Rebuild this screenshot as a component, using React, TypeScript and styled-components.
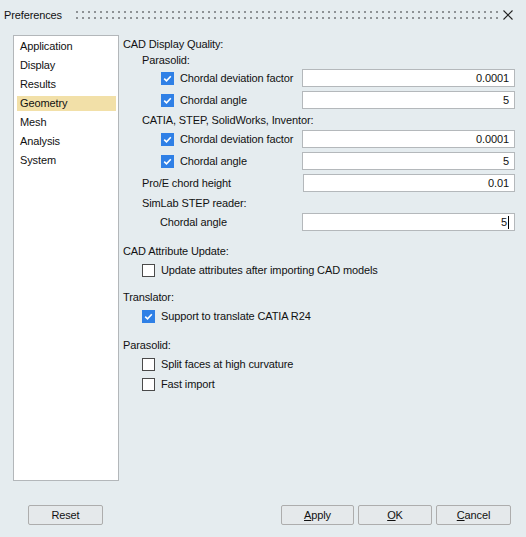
import styled, { createGlobalStyle } from "styled-components";

const GlobalStyle = createGlobalStyle`
  html, body {
    margin: 0;
    padding: 0;
    background: #e5ecef;
  }
  body {
    font-family: "Liberation Sans", Arial, sans-serif;
    font-size: 11px;
    letter-spacing: -0.12px;
    color: #111;
  }
`;

const Window = styled.div`
  width: 526px;
  height: 537px;
  display: flex;
  flex-direction: column;
  background: #e5ecef;
  overflow: hidden;
`;

const TitleBar = styled.div`
  height: 30px;
  display: flex;
  align-items: center;
  padding: 0 13px 0 4px;
`;

const Title = styled.span`
  font-size: 11px;
  width: 72px;
  line-height: 14px;
`;

const Grip = styled.svg`
  flex: 1;
  height: 30px;
  display: block;
`;

const CloseIcon = styled.svg`
  width: 10px;
  height: 10px;
  margin-left: 1px;
  margin-top: -1px;
`;

const Main = styled.div`
  display: flex;
  padding: 5px 11px 0 13px;
  box-sizing: border-box;
  height: 451px;
`;

const NavList = styled.div`
  width: 106px;
  height: 446px;
  box-sizing: border-box;
  background: #fff;
  border: 1px solid #b3b7ba;
  padding-top: 3px;
`;

const NavItem = styled.div<{ $active?: boolean }>`
  height: 15px;
  line-height: 15px;
  margin: 0 2px 4px 3px;
  padding-left: 3px;
  background: ${p => (p.$active ? "#f2e0a8" : "transparent")};
`;

const Content = styled.div`
  flex: 1;
  padding-left: 4px;
  display: flex;
  flex-direction: column;
`;

const Row = styled.div<{ $h: number; $indent?: number; $top?: number }>`
  height: ${p => p.$h}px;
  margin-top: ${p => p.$top ?? 0}px;
  padding-left: ${p => p.$indent ?? 0}px;
  display: flex;
  align-items: center;
  white-space: nowrap;
`;

const Label = styled.span`
  flex: 1;
  line-height: 14px;
`;

const Field = styled.div<{ $w?: number }>`
  width: ${p => p.$w ?? 213}px;
  height: 18px;
  box-sizing: border-box;
  background: #fff;
  border: 1px solid #b4b8bb;
  display: flex;
  align-items: center;
  justify-content: flex-end;
  padding-right: 5px;
  font-size: 11px;
`;

const Caret = styled.span`
  display: inline-block;
  width: 1px;
  height: 13px;
  background: #000;
  margin-left: 1px;
`;

const Box = styled.span<{ $checked?: boolean }>`
  width: 13px;
  height: 13px;
  box-sizing: border-box;
  flex: none;
  margin-right: 6px;
  background: ${p => (p.$checked ? "#2f80e6" : "#fff")};
  border: 1px solid ${p => (p.$checked ? "#2f80e6" : "#4a4a4a")};
  display: flex;
  align-items: center;
  justify-content: center;
`;

const Footer = styled.div`
  display: flex;
  align-items: center;
  padding: 24px 15px 0 28px;
  gap: 4px;
`;

const Button = styled.div<{ $w?: number }>`
  width: ${p => p.$w ?? 74}px;
  height: 20px;
  box-sizing: border-box;
  border: 1px solid #adadad;
  border-radius: 2px;
  background: #e5e9eb;
  display: flex;
  align-items: center;
  justify-content: center;
  font-size: 11px;
`;

const Spacer = styled.div`
  flex: 1;
`;

const Check = ({ checked }: { checked?: boolean }) => (
  <Box $checked={checked}>
    {checked && (
      <svg width="9" height="9" viewBox="0 0 9 9">
        <path d="M1.2 4.6 L3.5 6.8 L7.8 2.2" fill="none" stroke="#fff" strokeWidth="1.6" />
      </svg>
    )}
  </Box>
);

const navItems = ["Application", "Display", "Results", "Geometry", "Mesh", "Analysis", "System"];

export default function App() {
  return (
    <Window>
      <GlobalStyle />
      <TitleBar>
        <Title>Preferences</Title>
        <Grip>
          <defs>
            <pattern id="dots" x="0" y="11" width="6" height="6" patternUnits="userSpaceOnUse">
              <rect width="2" height="2" fill="#8e9295" />
            </pattern>
          </defs>
          <rect x="0" y="11" width="100%" height="8" fill="url(#dots)" />
        </Grip>
        <CloseIcon viewBox="0 0 10 10">
          <path d="M0.5 0.5 L9.5 9.5 M9.5 0.5 L0.5 9.5" stroke="#222" strokeWidth="1.1" />
        </CloseIcon>
      </TitleBar>
      <Main>
        <NavList>
          {navItems.map(n => (
            <NavItem key={n} $active={n === "Geometry"}>
              {n}
            </NavItem>
          ))}
        </NavList>
        <Content>
          <Row $h={17}>CAD Display Quality:</Row>
          <Row $h={15} $indent={19}>Parasolid:</Row>
          <Row $h={22} $indent={38}>
            <Check checked />
            <Label>Chordal deviation factor</Label>
            <Field>0.0001</Field>
          </Row>
          <Row $h={22} $indent={38}>
            <Check checked />
            <Label>Chordal angle</Label>
            <Field>5</Field>
          </Row>
          <Row $h={17} $indent={19}>CATIA, STEP, SolidWorks, Inventor:</Row>
          <Row $h={22} $indent={38}>
            <Check checked />
            <Label>Chordal deviation factor</Label>
            <Field>0.0001</Field>
          </Row>
          <Row $h={22} $indent={38}>
            <Check checked />
            <Label>Chordal angle</Label>
            <Field>5</Field>
          </Row>
          <Row $h={22} $indent={19}>
            <Label>Pro/E chord height</Label>
            <Field $w={212}>0.01</Field>
          </Row>
          <Row $h={17} $indent={19}>SimLab STEP reader:</Row>
          <Row $h={22} $indent={37}>
            <Label>Chordal angle</Label>
            <Field>
              5<Caret />
            </Field>
          </Row>

          <Row $h={18} $top={9}>CAD Attribute Update:</Row>
          <Row $h={20} $indent={19}>
            <Check />
            <Label>Update attributes after importing CAD models</Label>
          </Row>

          <Row $h={18} $top={8}>Translator:</Row>
          <Row $h={20} $indent={19}>
            <Check checked />
            <Label>Support to translate CATIA R24</Label>
          </Row>

          <Row $h={18} $top={10}>Parasolid:</Row>
          <Row $h={20} $indent={19}>
            <Check />
            <Label>Split faces at high curvature</Label>
          </Row>
          <Row $h={20} $indent={19}>
            <Check />
            <Label>Fast import</Label>
          </Row>
        </Content>
      </Main>
      <Footer>
        <Button $w={75}>Reset</Button>
        <Spacer />
        <Button $w={73}>
          <u>A</u>pply
        </Button>
        <Button>
          <u>O</u>K
        </Button>
        <Button $w={75}>
          <u>C</u>ancel
        </Button>
      </Footer>
    </Window>
  );
}
